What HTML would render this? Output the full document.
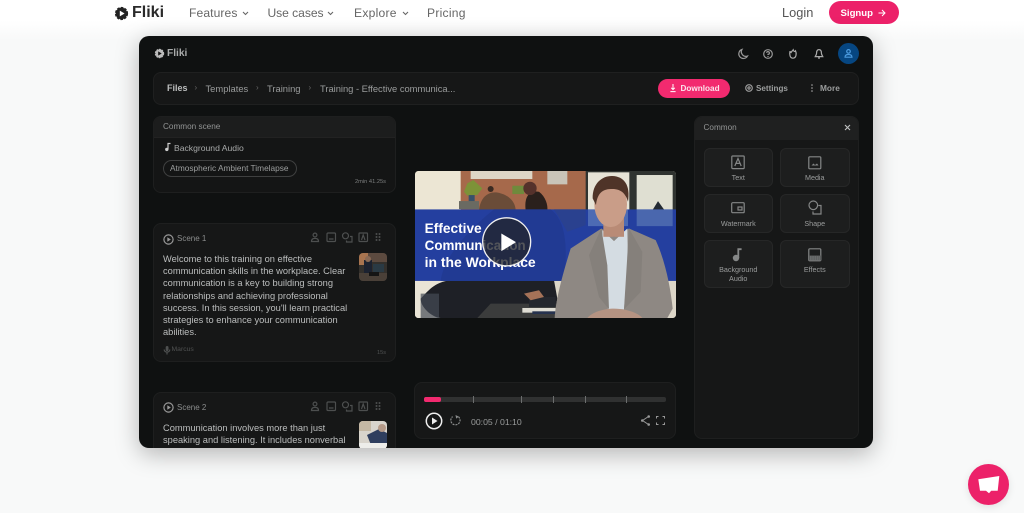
<!DOCTYPE html>
<html><head><meta charset="utf-8">
<style>
html,body{margin:0;padding:0;width:1024px;height:513px;overflow:hidden;background:#f8f9f9;font-family:"Liberation Sans",sans-serif}
#w{position:absolute;left:0;top:0;width:1024px;height:513px;overflow:hidden;background:#f8f9f9;filter:blur(.35px)}
.t{position:absolute;white-space:nowrap;line-height:1}
.b{position:absolute;box-sizing:border-box}
svg{position:absolute;overflow:visible}
.tile{position:absolute;box-sizing:border-box;background:#1d1e1e;border:1px solid #262727;border-radius:6px;width:69.5px;color:#9a9c9c;font-size:7.2px;text-align:center}
.tile span{position:absolute;left:0;right:0;line-height:9.3px}
.ic{fill:none;stroke:currentColor;stroke-width:1.2}
.n{top:6.5px;font-size:12.1px;color:#666}
</style></head><body><div id="w">
<div class="b" style="left:0;top:0;width:1024px;height:30px;background:#fff"></div>
<div class="b" style="left:0;top:20px;width:1024px;height:20px;background:linear-gradient(#fff,#f8f9f9)"></div>

<!-- nav -->
<svg style="left:114px;top:6px" width="15" height="15" viewBox="0 0 15 15"><circle cx="7.5" cy="7.5" r="5.7" fill="#222" stroke="#222" stroke-width="1.8" stroke-dasharray="2.6 1.1"/><circle cx="7.5" cy="7.5" r="5.4" fill="#222"/><path d="M5.8 4.6L10.6 7.5L5.8 10.4Z" fill="#fff"/></svg>
<div class="t" style="left:132px;top:5px;font-size:16px;font-weight:bold;color:#2a2a2a">Fliki</div>
<div class="t n" style="left:189px;letter-spacing:.1px">Features</div>
<svg style="left:242px;top:11px" width="7" height="5"><path d="M1 1L3.5 3.5L6 1" fill="none" stroke="#666" stroke-width="1.1"/></svg>
<div class="t n" style="left:267.5px;letter-spacing:-.05px">Use cases</div>
<svg style="left:327px;top:11px" width="7" height="5"><path d="M1 1L3.5 3.5L6 1" fill="none" stroke="#666" stroke-width="1.1"/></svg>
<div class="t n" style="left:354px;letter-spacing:.25px">Explore</div>
<svg style="left:401.5px;top:11px" width="7" height="5"><path d="M1 1L3.5 3.5L6 1" fill="none" stroke="#666" stroke-width="1.1"/></svg>
<div class="t n" style="left:427px;letter-spacing:.25px">Pricing</div>
<div class="t" style="left:782px;top:6.5px;font-size:12.8px;color:#555">Login</div>
<div class="b" style="left:829px;top:1px;width:70px;height:23px;border-radius:12px;background:#ec2169"></div>
<div class="t" style="left:840.5px;top:8.5px;font-size:9.6px;font-weight:bold;color:#fff">Signup</div>
<svg style="left:877px;top:8px" width="10" height="10"><path d="M1.5 5H8M5 2L8 5L5 8" fill="none" stroke="#fff" stroke-width="1"/></svg>

<!-- app frame -->
<div class="b" style="left:139px;top:36px;width:734px;height:412px;border-radius:10px;background:#0f1111;box-shadow:0 6px 24px rgba(0,0,0,.28);overflow:hidden" id="f">

<svg style="left:15px;top:12px" width="11" height="11" viewBox="0 0 11 11"><circle cx="5.5" cy="5.5" r="4" fill="#bbb" stroke="#bbb" stroke-width="1.4" stroke-dasharray="1.8 .8"/><circle cx="5.5" cy="5.5" r="4" fill="#bbb"/><path d="M4.2 3.4L7.7 5.5L4.2 7.6Z" fill="#111"/></svg>
<div class="t" style="left:28px;top:12.5px;font-size:10.2px;font-weight:bold;color:#a9abab">Fliki</div>

<!-- top icons -->
<svg style="left:598px;top:11.5px;color:#999" width="12" height="12" viewBox="0 0 12 12"><path class="ic" d="M5 1.5A4.6 4.6 0 1 0 10.5 8A4.5 4.5 0 0 1 5 1.5Z" stroke-width="1.1"/></svg>
<svg style="left:623px;top:11.5px;color:#999" width="12" height="12" viewBox="0 0 12 12"><circle class="ic" cx="6" cy="6" r="4.3"/><path class="ic" d="M4.6 4.8A1.4 1.4 0 1 1 6 6.4V7"/><path class="ic" d="M6 8V9"/></svg>
<svg style="left:648px;top:11.5px;color:#aaa" width="12" height="12" viewBox="0 0 12 12"><path class="ic" d="M3 3.2C3.2 4 3.6 4.4 4 4.6C4.5 3.5 5.4 3 6.2 1.8C6.5 3 7.5 4.2 8.5 2.8C9.6 5 9.6 10 6 10.2C3 10.2 2.2 6.5 3 3.2Z" stroke-width="1.5"/></svg>
<svg style="left:674px;top:11.5px;color:#aaa" width="12" height="12" viewBox="0 0 12 12"><path class="ic" d="M6 1.6C8 1.6 8.4 3.4 8.4 5C8.4 6.8 9.4 7.6 9.8 8.6H2.2C2.6 7.6 3.6 6.8 3.6 5C3.6 3.4 4 1.6 6 1.6Z"/><path class="ic" d="M5 10H7"/></svg>
<div class="b" style="left:699px;top:7px;width:21px;height:21px;border-radius:50%;background:#064681"></div>
<svg style="left:704px;top:12px" width="11" height="11" viewBox="0 0 11 11"><circle cx="5.5" cy="3.4" r="1.8" fill="none" stroke="#4b9be0" stroke-width="1.2"/><path d="M2 9.2C2 7 3.5 6.5 5.5 6.5S9 7 9 9.2Z" fill="none" stroke="#4b9be0" stroke-width="1.2"/></svg>

<!-- breadcrumb bar -->
<div class="b" style="left:14px;top:36px;width:706px;height:33px;background:#161717;border:1px solid #1f2020;border-radius:8px"></div>
<div class="t" style="left:28px;top:48px;font-size:9px;color:#bcbebe;font-weight:bold">Files</div>
<div class="t" style="left:55.5px;top:48px;font-size:8px;color:#666">›</div>
<div class="t" style="left:66.5px;top:48px;font-size:9.4px;color:#9a9c9c">Templates</div>
<div class="t" style="left:117px;top:48px;font-size:8px;color:#666">›</div>
<div class="t" style="left:128px;top:48px;font-size:9.4px;color:#9a9c9c">Training</div>
<div class="t" style="left:169.5px;top:48px;font-size:8px;color:#666">›</div>
<div class="t" style="left:181px;top:48px;font-size:9.4px;letter-spacing:-.02px;color:#9a9c9c">Training - Effective communica...</div>
<div class="b" style="left:519px;top:42.5px;width:71.5px;height:19.5px;border-radius:10px;background:#f22a6f"></div>
<svg style="left:529px;top:47px" width="10" height="10" viewBox="0 0 10 10"><path d="M5 1V6.5M3.2 4.8L5 6.6L6.8 4.8M2.4 8.6H7.6" fill="none" stroke="#fff" stroke-width="1"/></svg>
<div class="t" style="left:541.5px;top:48.5px;font-size:8.2px;font-weight:bold;color:#fbe3eb">Download</div>
<svg style="left:605px;top:47px;color:#999" width="10" height="10" viewBox="0 0 10 10"><circle class="ic" cx="5" cy="5" r="3.3" stroke-width="1.1"/><circle class="ic" cx="5" cy="5" r="1.1" stroke-width=".9"/></svg>
<div class="t" style="left:617px;top:48.5px;font-size:8.1px;color:#9c9e9e;font-weight:bold">Settings</div>
<svg style="left:671px;top:47px" width="4" height="10"><circle cx="2" cy="2" r=".8" fill="#aaa"/><circle cx="2" cy="5" r=".8" fill="#aaa"/><circle cx="2" cy="8" r=".8" fill="#aaa"/></svg>
<div class="t" style="left:681px;top:48px;font-size:8.3px;color:#9c9e9e;font-weight:bold">More</div>

<!-- common scene -->
<div class="b" style="left:14px;top:80px;width:243px;height:77px;background:#141515;border:1px solid #1e1f1f;border-radius:8px;overflow:hidden">
<div class="b" style="left:0;top:0;width:100%;height:20.5px;background:#1c1d1d;border-bottom:1px solid #222"></div></div>
<div class="t" style="left:24px;top:87px;font-size:8.2px;color:#929494">Common scene</div>
<svg style="left:25px;top:106px" width="8" height="10" viewBox="0 0 8 10"><circle cx="2.8" cy="7.4" r="1.7" fill="#ccc"/><path d="M4 7.4V1.5H6.5" fill="none" stroke="#ccc" stroke-width="1.2"/></svg>
<div class="t" style="left:35px;top:107.5px;font-size:8.6px;color:#a8aaaa">Background Audio</div>
<div class="b" style="left:24px;top:124px;width:134px;height:16.5px;border:1px solid #3f4040;border-radius:9px"></div>
<div class="t" style="left:31px;top:128px;font-size:8.3px;color:#9c9e9e">Atmospheric Ambient Timelapse</div>
<div class="t" style="left:216px;top:143.5px;font-size:5.7px;color:#7c7e7e">2min 41.25s</div>

<!-- scene 1 -->
<div class="b" style="left:14px;top:187px;width:243px;height:139px;background:#161717;border:1px solid #1e1f1f;border-radius:8px"></div>
<svg style="left:24px;top:197.5px;color:#999" width="11" height="11" viewBox="0 0 11 11"><circle class="ic" cx="5.5" cy="5.5" r="4.6"/><path d="M4.3 3.3L7.8 5.5L4.3 7.7Z" fill="#999"/></svg>
<div class="t" style="left:38px;top:199px;font-size:8px;color:#8b8d8d">Scene 1</div>
<svg style="left:170px;top:196px;color:#4d4f4f" width="80" height="11" viewBox="0 0 80 11"><circle class="ic" cx="6" cy="3" r="1.9"/><path class="ic" d="M2.5 9.5C2.5 7 4 6.4 6 6.4S9.5 7 9.5 9.5Z"/><rect class="ic" x="18" y="1" width="8.5" height="8.5" rx="1"/><path class="ic" d="M20 7H24.5" stroke-width=".9"/><circle class="ic" cx="36.5" cy="3.8" r="3"/><path class="ic" d="M41 4.5H43V10H37.5V8.5"/><rect class="ic" x="50" y="1" width="8.5" height="8.5" rx=".6"/><path class="ic" d="M52.5 8L54.2 3L56 8" stroke-width=".8"/><g fill="#4d4f4f"><circle cx="67.5" cy="2" r="1"/><circle cx="70.5" cy="2" r="1"/><circle cx="67.5" cy="5" r="1"/><circle cx="70.5" cy="5" r="1"/><circle cx="67.5" cy="8" r="1"/><circle cx="70.5" cy="8" r="1"/></g></svg>
<div class="t" style="left:24px;top:216.7px;font-size:9.3px;line-height:12.3px;color:#bcbebe">Welcome to this training on effective<br>communication skills in the workplace. Clear<br>communication is a key to building strong<br>relationships and achieving professional<br>success. In this session, you'll learn practical<br>strategies to enhance your communication<br>abilities.</div>
<svg style="left:219.5px;top:216.5px;border-radius:4px;overflow:hidden" width="28" height="28" viewBox="0 0 28 28"><rect width="28" height="28" fill="#33302c"/><rect width="9" height="12" fill="#a8744f"/><rect x="9" width="19" height="9" fill="#5c4a3f"/><rect x="5" y="7" width="8" height="14" fill="#1c2230"/><circle cx="9" cy="6" r="3" fill="#8a6a55"/><rect x="14" y="11" width="11" height="8" fill="#2a3a44"/><rect x="0" y="20" width="28" height="8" fill="#4a4038"/><rect x="10" y="19" width="10" height="4" fill="#151515"/></svg>
<svg style="left:24px;top:309px;color:#4e5050" width="8" height="10" viewBox="0 0 8 10"><rect x="2.7" y="1" width="2.8" height="5" rx="1.4" fill="#4e5050"/><path class="ic" d="M1.2 4.5C1.2 8 6.8 8 6.8 4.5M4 7.5V9.5" stroke-width=".8"/></svg>
<div class="t" style="left:32.5px;top:311px;font-size:6.8px;color:#505252">Marcus</div>
<div class="t" style="left:238px;top:315px;font-size:5.6px;color:#505252">15s</div>

<!-- scene 2 -->
<div class="b" style="left:14px;top:356px;width:243px;height:80px;background:#161717;border:1px solid #1e1f1f;border-radius:8px"></div>
<svg style="left:24px;top:366px;color:#999" width="11" height="11" viewBox="0 0 11 11"><circle class="ic" cx="5.5" cy="5.5" r="4.6"/><path d="M4.3 3.3L7.8 5.5L4.3 7.7Z" fill="#999"/></svg>
<div class="t" style="left:38px;top:367.5px;font-size:8px;color:#8b8d8d">Scene 2</div>
<svg style="left:170px;top:365px;color:#4d4f4f" width="80" height="11" viewBox="0 0 80 11"><circle class="ic" cx="6" cy="3" r="1.9"/><path class="ic" d="M2.5 9.5C2.5 7 4 6.4 6 6.4S9.5 7 9.5 9.5Z"/><rect class="ic" x="18" y="1" width="8.5" height="8.5" rx="1"/><path class="ic" d="M20 7H24.5" stroke-width=".9"/><circle class="ic" cx="36.5" cy="3.8" r="3"/><path class="ic" d="M41 4.5H43V10H37.5V8.5"/><rect class="ic" x="50" y="1" width="8.5" height="8.5" rx=".6"/><path class="ic" d="M52.5 8L54.2 3L56 8" stroke-width=".8"/><g fill="#4d4f4f"><circle cx="67.5" cy="2" r="1"/><circle cx="70.5" cy="2" r="1"/><circle cx="67.5" cy="5" r="1"/><circle cx="70.5" cy="5" r="1"/><circle cx="67.5" cy="8" r="1"/><circle cx="70.5" cy="8" r="1"/></g></svg>
<div class="t" style="left:24px;top:385.7px;font-size:9.3px;line-height:12.3px;color:#bcbebe">Communication involves more than just<br>speaking and listening. It includes nonverbal</div>
<svg style="left:219.5px;top:385px;border-radius:4px;overflow:hidden" width="28" height="28" viewBox="0 0 28 28"><rect width="28" height="28" fill="#d8d4cc"/><rect x="0" width="12" height="10" fill="#c4b8a4"/><path d="M8 14L20 8L28 12V24H12Z" fill="#2f3e5e"/><circle cx="23" cy="7" r="4" fill="#b59a88"/><rect y="22" width="28" height="6" fill="#ededea"/></svg>

<!-- video -->
<svg style="left:275.5px;top:135px;border-radius:3px;overflow:hidden" width="261" height="147" viewBox="13 18 783 440" preserveAspectRatio="none">
<defs><clipPath id="v"><rect x="13" y="18" width="783" height="440" rx="10"/></clipPath></defs>
<g clip-path="url(#v)">
<rect x="13" y="18" width="783" height="440" fill="#d9d2c0"/>
<rect x="13" y="18" width="140" height="120" fill="#ece6d4"/>
<rect x="150" y="18" width="376" height="118" fill="#a6694b"/>
<rect x="180" y="18" width="185" height="24" fill="#ddd6c6"/>
<rect x="410" y="18" width="60" height="40" fill="#c9c4b8"/>
<rect x="145" y="108" width="60" height="24" fill="#6a6a62"/>
<path d="M160 80L170 55L188 45L215 70L200 90L170 92Z" fill="#7d9238"/><rect x="174" y="90" width="18" height="18" fill="#37516a"/>
<rect x="305" y="62" width="35" height="25" fill="#6f8a3c"/>
<rect x="525" y="18" width="271" height="118" fill="#2f3330"/>
<rect x="532" y="22" width="124" height="114" fill="#e6e3d6"/>
<rect x="678" y="30" width="108" height="106" fill="#dfdfd2"/>
<path d="M725 136L742 108L762 136Z" fill="#232a33"/>
<path d="M205 136C210 90 240 75 270 85C305 95 315 120 315 136Z" fill="#6a4c38"/>
<path d="M345 136C340 95 355 75 385 80C405 95 412 120 410 136Z" fill="#2a201c"/>
<circle cx="240" cy="72" r="9" fill="#3a2a22"/><circle cx="358" cy="70" r="20" fill="#54312b"/>
<rect x="13" y="345" width="783" height="113" fill="#dcd6c8"/>
<rect x="13" y="345" width="80" height="113" fill="#e9e4d6"/>
<path d="M30 400C50 380 70 350 120 345H430L440 400L430 458H90C70 458 30 430 30 400Z" fill="#1e2026"/>
<rect x="30" y="385" width="55" height="73" fill="#444c55" opacity=".7"/>
<path d="M200 458L240 415H440V458Z" fill="#3b3c3c"/>
<rect x="355" y="395" width="80" height="30" fill="#24272e"/>
<rect x="335" y="428" width="100" height="14" fill="#dfddd4"/><rect x="365" y="438" width="75" height="8" fill="#26324e"/>
<path d="M340 385L385 375L400 395L360 405Z" fill="#a57258"/>
<rect x="13" y="133" width="783" height="214" fill="#243f9f"/>
<path d="M90 347C100 270 180 190 250 133H420C470 170 470 260 460 347Z" fill="#213a93"/>
<path d="M430 133H525V180L470 200Z" fill="#2a418f"/>
<rect x="532" y="133" width="120" height="50" fill="#4d6bb4"/><rect x="678" y="133" width="108" height="50" fill="#4a67ae"/>
<path d="M432 458C436 400 455 330 480 250L572 190L610 215L655 190L735 225C765 290 780 370 786 430L770 458Z" fill="#8e8883"/>
<path d="M575 195L610 228L650 190L652 300L640 432H592L578 300Z" fill="#d4dce2"/>
<path d="M572 190L590 300L595 432L565 395L535 270Z" fill="#85807b"/>
<path d="M655 190L640 432L690 380L695 260Z" fill="#85807b"/>
<path d="M530 458C545 440 580 430 610 430C640 430 680 440 695 458Z" fill="#b59382"/>
<rect x="578" y="150" width="62" height="65" fill="#b98b76"/>
<ellipse cx="600" cy="118" rx="49" ry="68" fill="#c99d88"/>
<path d="M546 100C545 55 575 32 605 33C640 34 660 60 652 110C645 85 630 70 600 72C575 73 560 85 556 120Z" fill="#4f3428"/>
<text x="42" y="203" font-family="Liberation Sans" font-weight="bold" font-size="40" fill="#fff" textLength="171" lengthAdjust="spacingAndGlyphs">Effective</text>
<text x="42" y="255" font-family="Liberation Sans" font-weight="bold" font-size="40" fill="#fff" textLength="303" lengthAdjust="spacingAndGlyphs">Communication</text>
<text x="42" y="305" font-family="Liberation Sans" font-weight="bold" font-size="40" fill="#fff" textLength="333" lengthAdjust="spacingAndGlyphs">in the Workplace</text>
<circle cx="288" cy="230" r="72" fill="#23252c" fill-opacity=".78" stroke="#f0f0f0" stroke-width="4"/>
<path d="M272 205L316 231L272 258Z" fill="#fff"/>
</g></svg>

<!-- player -->
<div class="b" style="left:275px;top:346px;width:262px;height:57px;background:#161717;border:1px solid #1e1f1f;border-radius:8px"></div>
<div class="b" style="left:285px;top:361px;width:242px;height:4.5px;background:#303131;border-radius:2px"></div>
<div class="b" style="left:285px;top:361px;width:17px;height:4.5px;background:#f22a6f;border-radius:2px"></div>
<div class="b" style="left:333.5px;top:359.5px;width:1.4px;height:7px;background:#6c6e6e"></div>
<div class="b" style="left:381.5px;top:359.5px;width:1.4px;height:7px;background:#6c6e6e"></div>
<div class="b" style="left:413.5px;top:359.5px;width:1.4px;height:7px;background:#6c6e6e"></div>
<div class="b" style="left:445.5px;top:359.5px;width:1.4px;height:7px;background:#6c6e6e"></div>
<div class="b" style="left:486.5px;top:359.5px;width:1.4px;height:7px;background:#6c6e6e"></div>
<svg style="left:286px;top:376px" width="18" height="18" viewBox="0 0 18 18"><circle cx="9" cy="9" r="7.7" fill="none" stroke="#eee" stroke-width="1.5"/><path d="M7 5.5L12.5 9L7 12.5Z" fill="#eee"/></svg>
<svg style="left:310px;top:378px" width="13" height="13" viewBox="0 0 13 13"><path d="M9.5 2.8A4.6 4.6 0 1 1 3.6 2.6" fill="none" stroke="#8b8d8d" stroke-width="1.2" stroke-dasharray="2 1"/><path d="M6.5 1L9.8 2.6L7.2 4.6Z" fill="#8b8d8d"/></svg>
<div class="t" style="left:332px;top:381.5px;font-size:8.7px;color:#9a9c9c">00:05 / 01:10</div>
<svg style="left:501px;top:378px" width="11" height="13" viewBox="0 0 11 13"><path d="M8.5 2.5L2.5 6.5L8.5 10.5" fill="none" stroke="#999" stroke-width="1"/><circle cx="8.7" cy="2.5" r="1.3" fill="#999"/><circle cx="2.3" cy="6.5" r="1.3" fill="#999"/><circle cx="8.7" cy="10.5" r="1.3" fill="#999"/></svg>
<svg style="left:516px;top:379px" width="11" height="11" viewBox="0 0 11 11"><path d="M1.5 3.5V1.5H3.5M7.5 1.5H9.5V3.5M9.5 7.5V9.5H7.5M3.5 9.5H1.5V7.5" fill="none" stroke="#999" stroke-width="1"/></svg>

<!-- right panel -->
<div class="b" style="left:555px;top:80px;width:165px;height:323px;background:#161717;border:1px solid #1e1f1f;border-radius:8px;overflow:hidden">
<div class="b" style="left:0;top:0;width:100%;height:23px;background:#1f2020"></div></div>
<div class="t" style="left:564.5px;top:87.5px;font-size:8.2px;color:#929494">Common</div>
<svg style="left:705px;top:88px" width="7" height="7"><path d="M1 1L6 6M6 1L1 6" stroke="#c0c2c2" stroke-width="1.1"/></svg>

<div class="tile" style="left:564.5px;top:112px;height:39px"><span style="top:24px">Text</span></div>
<div class="tile" style="left:641px;top:112px;height:39px"><span style="top:24px">Media</span></div>
<div class="tile" style="left:564.5px;top:158px;height:39px"><span style="top:24px">Watermark</span></div>
<div class="tile" style="left:641px;top:158px;height:39px"><span style="top:24px">Shape</span></div>
<div class="tile" style="left:564.5px;top:204px;height:48px"><span style="top:23.5px">Background</span><span style="top:32.8px">Audio</span></div>
<div class="tile" style="left:641px;top:204px;height:48px"><span style="top:23.5px">Effects</span></div>

<svg style="left:592px;top:119px;color:#858787" width="14" height="15" viewBox="0 0 14 15"><rect class="ic" x=".8" y="1" width="12.4" height="12.6" rx=".8"/><path class="ic" d="M3.8 11L7 3.5L10.2 11M5 8.4H9" stroke-width="1"/></svg>
<svg style="left:668.5px;top:119.5px;color:#858787" width="14" height="14" viewBox="0 0 14 14"><rect class="ic" x=".8" y=".8" width="12" height="12" rx="1"/><path d="M3.5 9.5L5.5 7.5L7 9L9 7.5L10.5 9.5Z" fill="#858787"/></svg>
<svg style="left:592px;top:166px;color:#858787" width="14" height="12" viewBox="0 0 14 12"><rect class="ic" x=".7" y=".7" width="12.5" height="10" rx="1"/><rect class="ic" x="7" y="5" width="4" height="3" stroke-width=".9"/></svg>
<svg style="left:668.5px;top:164px;color:#858787" width="14" height="15" viewBox="0 0 14 15"><circle class="ic" cx="5.3" cy="5.3" r="4.3"/><path class="ic" d="M10.3 5.5H13V14H5V11.5"/></svg>
<svg style="left:593px;top:211px;color:#858787" width="11" height="15" viewBox="0 0 11 15"><circle cx="4" cy="11" r="3.2" fill="#858787"/><path d="M6.3 11V2.2H9.6" fill="none" stroke="#858787" stroke-width="1.8"/></svg>
<svg style="left:668.5px;top:211.5px;color:#858787" width="14" height="14" viewBox="0 0 14 14"><rect class="ic" x=".8" y=".8" width="12" height="12" rx="1"/><path d="M1 7.5H13V12.5H1Z" fill="#5a5c5c"/><path d="M2 9H12M2 11H12" stroke="#858787" stroke-width=".8" stroke-dasharray="1.5 .8"/></svg>
</div>

<!-- chat bubble -->
<div class="b" style="left:968px;top:464px;width:41px;height:41px;border-radius:50%;background:#ec2169;box-shadow:0 2px 8px rgba(0,0,0,.1)"></div>
<svg style="left:977px;top:475px" width="24" height="20" viewBox="0 0 24 20"><path d="M1.3 4.3L22.3 1L20.7 15.7L14.2 15.7L12 18.3L9 15.7L3 15.7Z" fill="#fff"/></svg>
</div></body></html>
